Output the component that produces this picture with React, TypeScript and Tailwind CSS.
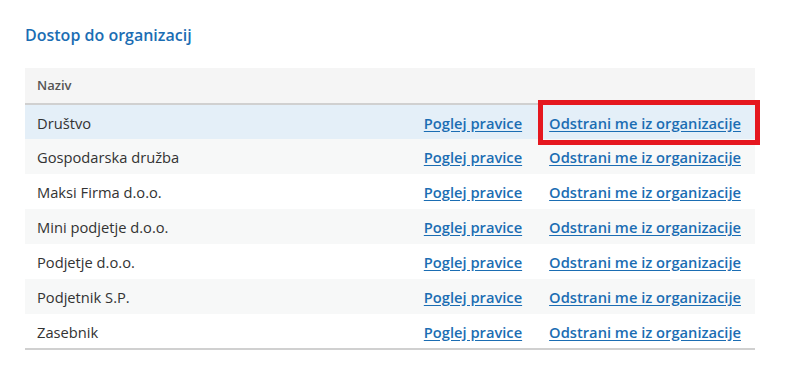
const organizations = [
  'Društvo',
  'Gospodarska družba',
  'Maksi Firma d.o.o.',
  'Mini podjetje d.o.o.',
  'Podjetje d.o.o.',
  'Podjetnik S.P.',
  'Zasebnik',
];

export default function App() {
  return (
    <div className="min-h-[379px] bg-white px-[25px] pt-[24px] font-['Open_Sans',sans-serif] text-[#333]">
      <h2 className="text-[16px] leading-[22px] font-semibold text-[#1b6db3]">Dostop do organizacij</h2>
      <div className="relative mt-[22px] w-[730px]">
        <table className="w-full border-collapse">
          <thead>
            <tr className="h-[36px] border-b-2 border-[#d0d0d0] bg-[#f5f5f5]">
              <th className="px-3 text-left text-[13px] font-semibold text-[#555]">Naziv</th>
              <th></th>
              <th></th>
            </tr>
          </thead>
          <tbody className="border-b-2 border-[#d0d0d0]">
            {organizations.map((name, i) => (
              <tr
                key={name}
                className={
                  i === 0 ? 'h-[35px] bg-[#e4eff8]' : i % 2 === 1 ? 'h-[35px] bg-[#f7f8f8]' : 'h-[35px] bg-white'
                }
              >
                <td className="pl-3 pt-px text-[14.7px] leading-5 text-[#333]">{name}</td>
                <td className="w-px whitespace-nowrap pt-px pl-3 pr-[13px] text-right leading-5">
                  <a href="#" className="text-[14.7px] font-semibold text-[#1b6db3] underline underline-offset-2">
                    Poglej pravice
                  </a>
                </td>
                <td className="w-px whitespace-nowrap pt-px pl-[14px] pr-[14px] text-right leading-5">
                  <a href="#" className="text-[14.7px] font-semibold text-[#1b6db3] underline underline-offset-2">
                    Odstrani me iz organizacije
                  </a>
                </td>
              </tr>
            ))}
          </tbody>
        </table>
        <div className="pointer-events-none absolute left-[513px] top-[32px] h-[45px] w-[222px] border-[5px] border-[#e5171f]"></div>
      </div>
    </div>
  );
}
